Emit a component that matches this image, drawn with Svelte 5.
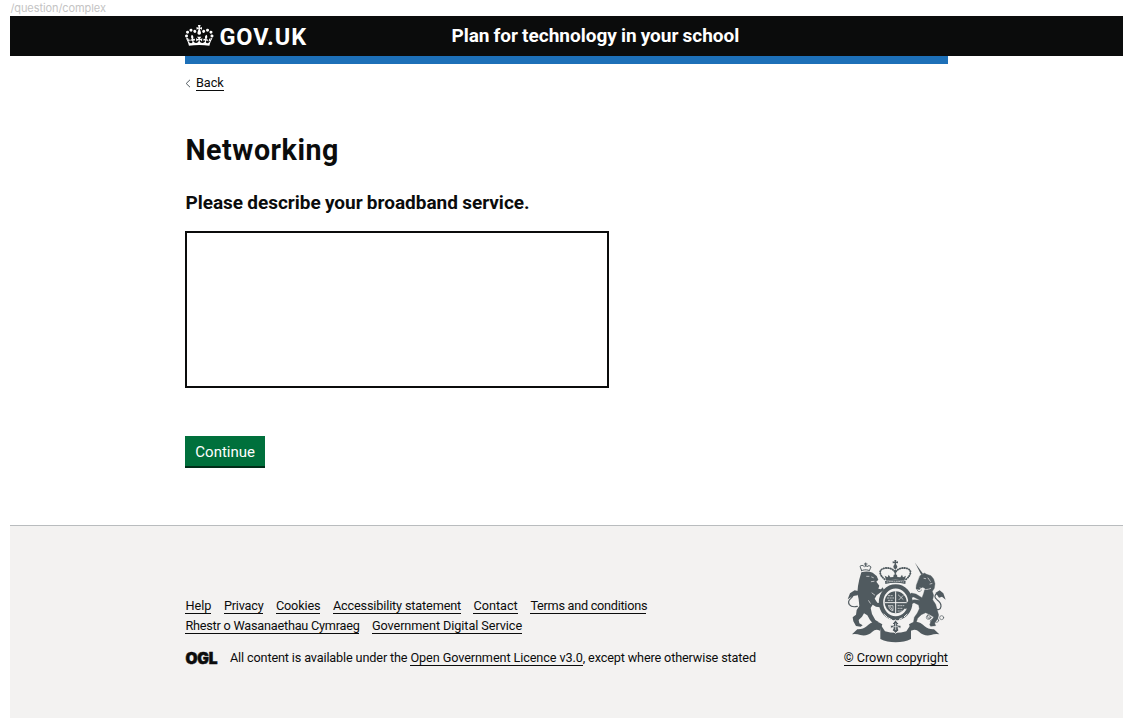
<script>
  const firstRow = [
    ['Help', 26, 0], ['Privacy', 39.5, -0.2], ['Cookies', 44.5, -0.15], ['Accessibility statement', 128, -0.15], ['Contact', 44.5, 0], ['Terms and conditions', 116, -0.27]
  ];
  const secondRow = [['Rhestr o Wasanaethau Cymraeg', 174, -0.22], ['Government Digital Service', 150, -0.08]];
</script>

<div class="page">
  <div class="path">/question/complex</div>
  <header>
    <div class="container bar">
      <a class="logo" href="#home" aria-label="GOV.UK">
        <svg class="crown" viewBox="0 0 132 97" fill="currentColor"><path d="M25 30.2c3.5 1.5 7.7-.2 9.1-3.7 1.5-3.6-.2-7.8-3.9-9.2-3.6-1.4-7.6.3-9.1 3.9-1.4 3.5.3 7.5 3.9 9zM9 39.5c3.6 1.5 7.8-.2 9.2-3.7 1.5-3.6-.2-7.8-3.9-9.1-3.6-1.5-7.6.2-9.1 3.8-1.4 3.5.3 7.5 3.8 9zM4.4 57.2c3.5 1.5 7.7-.2 9.1-3.8 1.5-3.6-.2-7.7-3.9-9.1-3.5-1.5-7.6.3-9.1 3.8-1.4 3.5.3 7.6 3.9 9.1zm38.3-21.4c3.5 1.5 7.7-.2 9.1-3.8 1.5-3.6-.2-7.7-3.9-9.1-3.6-1.5-7.6.3-9.1 3.8-1.3 3.6.4 7.7 3.9 9.1zm64.4-5.6c-3.6 1.5-7.8-.2-9.1-3.7-1.5-3.6.2-7.8 3.8-9.2 3.6-1.4 7.7.3 9.2 3.9 1.3 3.5-.4 7.5-3.9 9zm15.9 9.3c-3.6 1.5-7.7-.2-9.1-3.7-1.5-3.6.2-7.8 3.7-9.1 3.6-1.5 7.7.2 9.2 3.8 1.5 3.5-.3 7.5-3.8 9zm4.7 17.7c-3.6 1.5-7.8-.2-9.2-3.8-1.5-3.6.2-7.7 3.9-9.1 3.6-1.5 7.7.3 9.2 3.8 1.3 3.5-.4 7.6-3.9 9.1zM89.3 35.8c-3.6 1.5-7.8-.2-9.2-3.8-1.4-3.6.2-7.7 3.9-9.1 3.6-1.5 7.7.3 9.2 3.8 1.4 3.6-.3 7.7-3.9 9.1zM69.7 17.7l8.9 4.7V9.3l-8.9 2.8c-.2-.3-.5-.6-.9-.9L72.4 0H59.6l3.5 11.2c-.3.3-.6.5-.9.9l-8.8-2.8v13.1l8.8-4.7c.3.3.6.7.9.9l-5 15.4v.1c-.2.8-.4 1.6-.4 2.4 0 4.1 3.1 7.5 7 8.1h.2c.3 0 .7.1 1 .1.4 0 .7 0 1-.1h.2c4-.6 7.1-4.1 7.1-8.1 0-.8-.1-1.7-.4-2.4V34l-5.1-15.4c.4-.2.7-.6 1-.9zM66 92.8c16.9 0 32.8 1.1 47.1 3.2 4-16.9 8.9-26.7 14-33.5l-9.6-3.4c1 4.9 1.1 7.2 0 10.2-1.5-1.4-3-4.3-4.2-8.7L108.6 76c2.8-2 5-3.2 7.5-3.3-4.4 9.4-10 11.9-13.6 11.2-4.3-.8-6.3-4.6-5.6-7.9 1-4.7 5.7-5.9 8-.5 4.3-8.7-3-11.4-7.6-8.8 7.1-7.2 7.9-13.5 2.1-21.1-8 6.1-8.1 12.3-4.5 20.8-4.7-5.4-12.1-2.5-9.5 6.2 3.4-5.2 7.9-2 7.2 3.1-.6 4.3-6.4 7.8-13.5 7.2-10.3-.9-10.9-8-11.2-13.8 2.5-.5 7.1 1.8 11 7.3L80.2 60c-4.1 4.4-8 5.3-12.3 5.4 1.4-4.4 8-11.6 8-11.6H55.5s6.4 7.2 7.9 11.6c-4.2-.1-8-1-12.3-5.4l1.4 16.4c3.9-5.5 8.5-7.7 10.9-7.3-.3 5.8-.9 12.8-11.1 13.8-7.2.6-12.9-2.9-13.5-7.2-.7-5 3.8-8.3 7.1-3.1 2.7-8.7-4.6-11.6-9.4-6.2 3.7-8.5 3.6-14.7-4.6-20.8-5.8 7.6-5 13.9 2.2 21.1-4.7-2.6-11.9.1-7.7 8.8 2.3-5.5 7.1-4.2 8.1.5.7 3.3-1.3 7.1-5.7 7.9-3.5.7-9-1.8-13.5-11.2 2.5.1 4.7 1.3 7.5 3.3l-4.7-15.4c-1.2 4.4-2.7 7.2-4.3 8.7-1.1-3-.9-5.3 0-10.2l-9.5 3.4c5 6.9 9.9 16.7 14 33.5 14.8-2.1 30.8-3.2 47.7-3.2z"/></svg>
        <span class="wordmark">GOV.UK</span>
      </a>
      <span class="service">Plan for technology in your school</span>
    </div>
  </header>
  <div class="container blue"></div>

  <main class="container">
    <div class="back">
      <svg viewBox="0 0 6 9"><path d="M5 .8 1.2 4.5 5 8.2" fill="none" stroke="#505a5f" stroke-width="1"/></svg>
      <a href="#back">Back</a>
    </div>
    <h1>Networking</h1>
    <label for="answer">Please describe your broadband service.</label>
    <textarea id="answer"></textarea>
    <button>Continue</button>
  </main>

  <footer>
    <div class="container foot">
      <div class="meta">
        <div class="row">{#each firstRow as [text, w, s]}<a href="#link" style="width:{w}px;letter-spacing:{s}px">{text}</a>{/each}</div>
        <div class="row">{#each secondRow as [text, w, s]}<a href="#link" style="width:{w}px;letter-spacing:{s}px">{text}</a>{/each}</div>
        <div class="licence">
          <span class="ogl">OGL</span>
          <span class="terms">All content is available under the <a href="#ogl">Open Government Licence v3.0</a>, except where otherwise stated</span>
        </div>
      </div>
      <div class="copyright">
        <svg class="arms" viewBox="12 12 312 252" fill="#505a5f" stroke-linecap="round" stroke-linejoin="round">
          <!-- royal crown -->
          <path d="M163 15h6l-1 5 6-1v6l-6-1 1 6h-6l1-6-6 1v-6l6 1z"/>
          <circle cx="166" cy="35" r="6"/>
          <path d="M134 73c-16-13-18-27-5-32 14-5 31-1 37 12M198 73c16-13 18-27 5-32-14-5-31-1-37 12M166 39v23" fill="none" stroke="#505a5f" stroke-width="5.5" stroke-dasharray="1 6"/>
          <path d="M134 73c-16-13-18-27-5-32 14-5 31-1 37 12M198 73c16-13 18-27 5-32-14-5-31-1-37 12" fill="none" stroke="#505a5f" stroke-width="2"/>
          <path d="m134 62 9 5 3-8 5 8 9-1 1-7h10l1 7 9 1 5-8 3 8 9-5-5 15q-27-6-54 0z"/>
          <path d="M135 78q31-6 62 0l-1 9q-30-7-60 0z"/>
          <path d="M141 81q25-4 50 0" stroke="#f3f2f1" stroke-width="2" stroke-dasharray="3 4" fill="none"/>
          <!-- garter and shield -->
          <ellipse cx="167" cy="142" rx="44" ry="48" fill="none" stroke="#505a5f" stroke-width="13"/>
          <circle cx="167" cy="142" r="33"/>
          <path d="M167 110v64M135 143h64" stroke="#f3f2f1" stroke-width="3"/>
          <path d="M145 122h16M142 129h19M145 136h16M174 152h18M174 160h16M174 168h12" stroke="#f3f2f1" stroke-width="2" stroke-dasharray="4 4"/>
          <path d="M175 120l14 13M189 122l-12 12M146 152h13v15q-11-1-13-15M150 154l7 10" fill="none" stroke="#f3f2f1" stroke-width="2"/>
          <path d="M132 178l10 9M146 189l10 6M178 193l8-4M193 185l8-7" stroke="#f3f2f1" stroke-width="3"/>
          <!-- lion -->
          <path d="M65 47l-5-13q7-6 13 1 4-9 8 0 7-6 12 1l-5 11M65 47q12-5 23 0M73 27h8M77 24v10" fill="none" stroke="#505a5f" stroke-width="3" stroke-dasharray="4 2"/>
          <g transform="translate(12 9)">
            <path d="M52 43 Q70 38 86 44 L98 54 103 65 97 71 106 83 103 92 111 94 116 88 120 96 108 104 98 112 92 122 100 134 112 136 116 142 108 148 96 146 86 140 80 150 84 168 94 186 104 192 100 198 86 196 78 186 70 172 60 166 54 176 44 186 46 196 56 202 50 206 36 204 28 190 26 178 36 170 38 156 46 144 44 124 40 104 42 84 46 64z"/>
            <path d="M68 55h7M83 57l5 2M82 71l8-1M84 105l8 6M74 128l5 8" fill="none" stroke="#f3f2f1" stroke-width="2"/>
          </g>
          <path d="M52 154q-17 4-24-5-6-10 4-18 7-6 10-15" fill="none" stroke="#505a5f" stroke-width="3.5"/>
          <path d="M23 133l7-18 14-9 13 3-4 12-13 2-6 3z"/>
          <!-- unicorn -->
          <path d="m225 23 24 33-5 4z"/>
          <path d="m240 62 13-8 7 4 13 4 8 10 4 14-2 14-6 9 4 12-3 13 9 14 5 18 4 14-3 12-9 12 3 8-15 2-3-5 5-12 7-11-14-8-10-5-13 6-11 11-4 12-3 16-12 1-3-7 9-9 3-16 9-13 6-13-2-11-14-7-12 6-6 11-9 1-2-7 10-14 19-6 18 2-19-10-10 3-6-6 9-9 14 3 18 11 5-13 4-15-8-3-9 7-10-3 1-10z" stroke="#505a5f" stroke-width="1"/>
          <path d="M252 70l5 1M264 69l7 10M270 87l8-2M240 99q18 9 34 0" fill="none" stroke="#f3f2f1" stroke-width="2" stroke-dasharray="6 3"/>
          <path d="M282 160q19 10 21-6 1-10-12-20-13-11 1-19" fill="none" stroke="#505a5f" stroke-width="3.5"/>
          <path d="m286 114 13-8 11 9 7 19-11-9-9 3-4-6z"/>
          <path d="M240 94q-14-2-9 10t14 1M214 137q-9 5-9 13M267 174q-8 8-3 15t11-2" fill="none" stroke="#505a5f" stroke-width="2"/>
          <g fill="none" stroke="#505a5f" stroke-width="2"><circle cx="265" cy="187" r="6"/><circle cx="276" cy="199" r="5"/><circle cx="290" cy="196" r="6"/><circle cx="305" cy="188" r="6"/></g>
          <!-- ribbon and badge -->
          <path d="M36 238l16-15q17 1 28-9 12-13 26-14 12 0 21 8l-7 19q-13-7-23 3-16 15-36 10-12-4-25-2z"/>
          <path d="M298 238l-16-15q-17 1-28-9-12-13-26-14-12 0-21 8l7 19q13-7 23 3 16 15 36 10 12-4 25-2z"/>
          <path d="M121 208l14 21q32 9 64 0l14-21v44q-20 10-46 10t-46-10z"/>
          <path d="m167 195 9 11-4 4 11 1v9l-9-2 3 8-10 9-10-9 3-8-9 2v-9l11-1-4-4z" stroke="#f3f2f1" stroke-width="3"/>
          <path d="m167 206v18M160 215h14" stroke="#f3f2f1" stroke-width="2"/>
        </svg>
        <a href="#copyright">© Crown copyright</a>
      </div>
    </div>
  </footer>
</div>

<style>
  :global(body) { margin: 0; background: #fff; }
  .page { box-sizing: border-box; width: 1123px; padding-left: 10.4px; font-family: Roboto, "Liberation Sans", sans-serif; color: #0b0c0c; }
  .container { width: 762.6px; margin-left: 175px; }
  .path { height: 16px; font: 11px/16px Inter, sans-serif; color: #c4c4c4; letter-spacing: -.08px; }
  header { height: 40px; background: #0b0c0c; color: #fff; }
  .bar { display: flex; height: 40px; }
  .logo { display: flex; width: 266px; color: #fff; text-decoration: none; }
  .crown { width: 28.5px; height: 21px; margin-top: 9px; flex: none; }
  .wordmark { font: 700 23.5px/42px Roboto, sans-serif; margin-left: 5.5px; letter-spacing: .95px; }
  .service { font-size: 19px; font-weight: 700; line-height: 40px; white-space: nowrap; letter-spacing: -.01px; word-spacing: -.6px; }
  .blue { height: 8px; background: #1d70b8; }
  main { height: 461px; display: flex; flex-direction: column; align-items: flex-start; }
  a { color: inherit; text-decoration: none; border-bottom: 1px solid #0b0c0c; white-space: nowrap; }
  .logo { border: 0; }
  .back { display: flex; align-items: center; margin-top: 12px; height: 15px; font-size: 12.7px; line-height: 14px; gap: 4.5px; }
  .back svg { width: 6px; height: 9px; }
  h1 { margin: 41px 0 0; font-size: 28.6px; line-height: 36px; letter-spacing: .55px; }
  label { margin-top: 23px; font-size: 19px; font-weight: 700; line-height: 24px; white-space: nowrap; letter-spacing: -.01px; word-spacing: -.5px; }
  textarea { box-sizing: border-box; width: 424px; height: 157px; margin: 16px 0 0; border: 2px solid #0b0c0c; border-radius: 0; resize: none; background: #fff; }
  button { width: 79.6px; height: 30px; margin: 48px 0 0; padding: 0; border: 0; background: #00703c; color: #fff; box-shadow: 0 2px 0 #002d18; font: 15px/32px Roboto, sans-serif; }
  footer { box-sizing: border-box; height: 193px; border-top: 1px solid #b9bcbe; background: #f3f2f1; font-size: 12.7px; line-height: 14px; }
  .foot { display: flex; justify-content: space-between; }
  .meta { padding-top: 73px; }
  .row { display: flex; gap: 12.5px; height: 20px; }
  .row a { height: 14px; }
  .licence { display: flex; margin-top: 12px; }
  .ogl { width: 44.6px; font: 900 15.5px/15px Inter, sans-serif; letter-spacing: -.2px; -webkit-text-stroke: .5px #0b0c0c; }
  .terms { white-space: nowrap; letter-spacing: -.15px; }
  .terms a { letter-spacing: -.11px; }
  .copyright { display: flex; flex-direction: column; align-items: flex-end; padding-top: 33px; }
  .copyright a { letter-spacing: -.05px; }
  .arms { width: 104px; height: 84px; margin-bottom: 8px; }
</style>
